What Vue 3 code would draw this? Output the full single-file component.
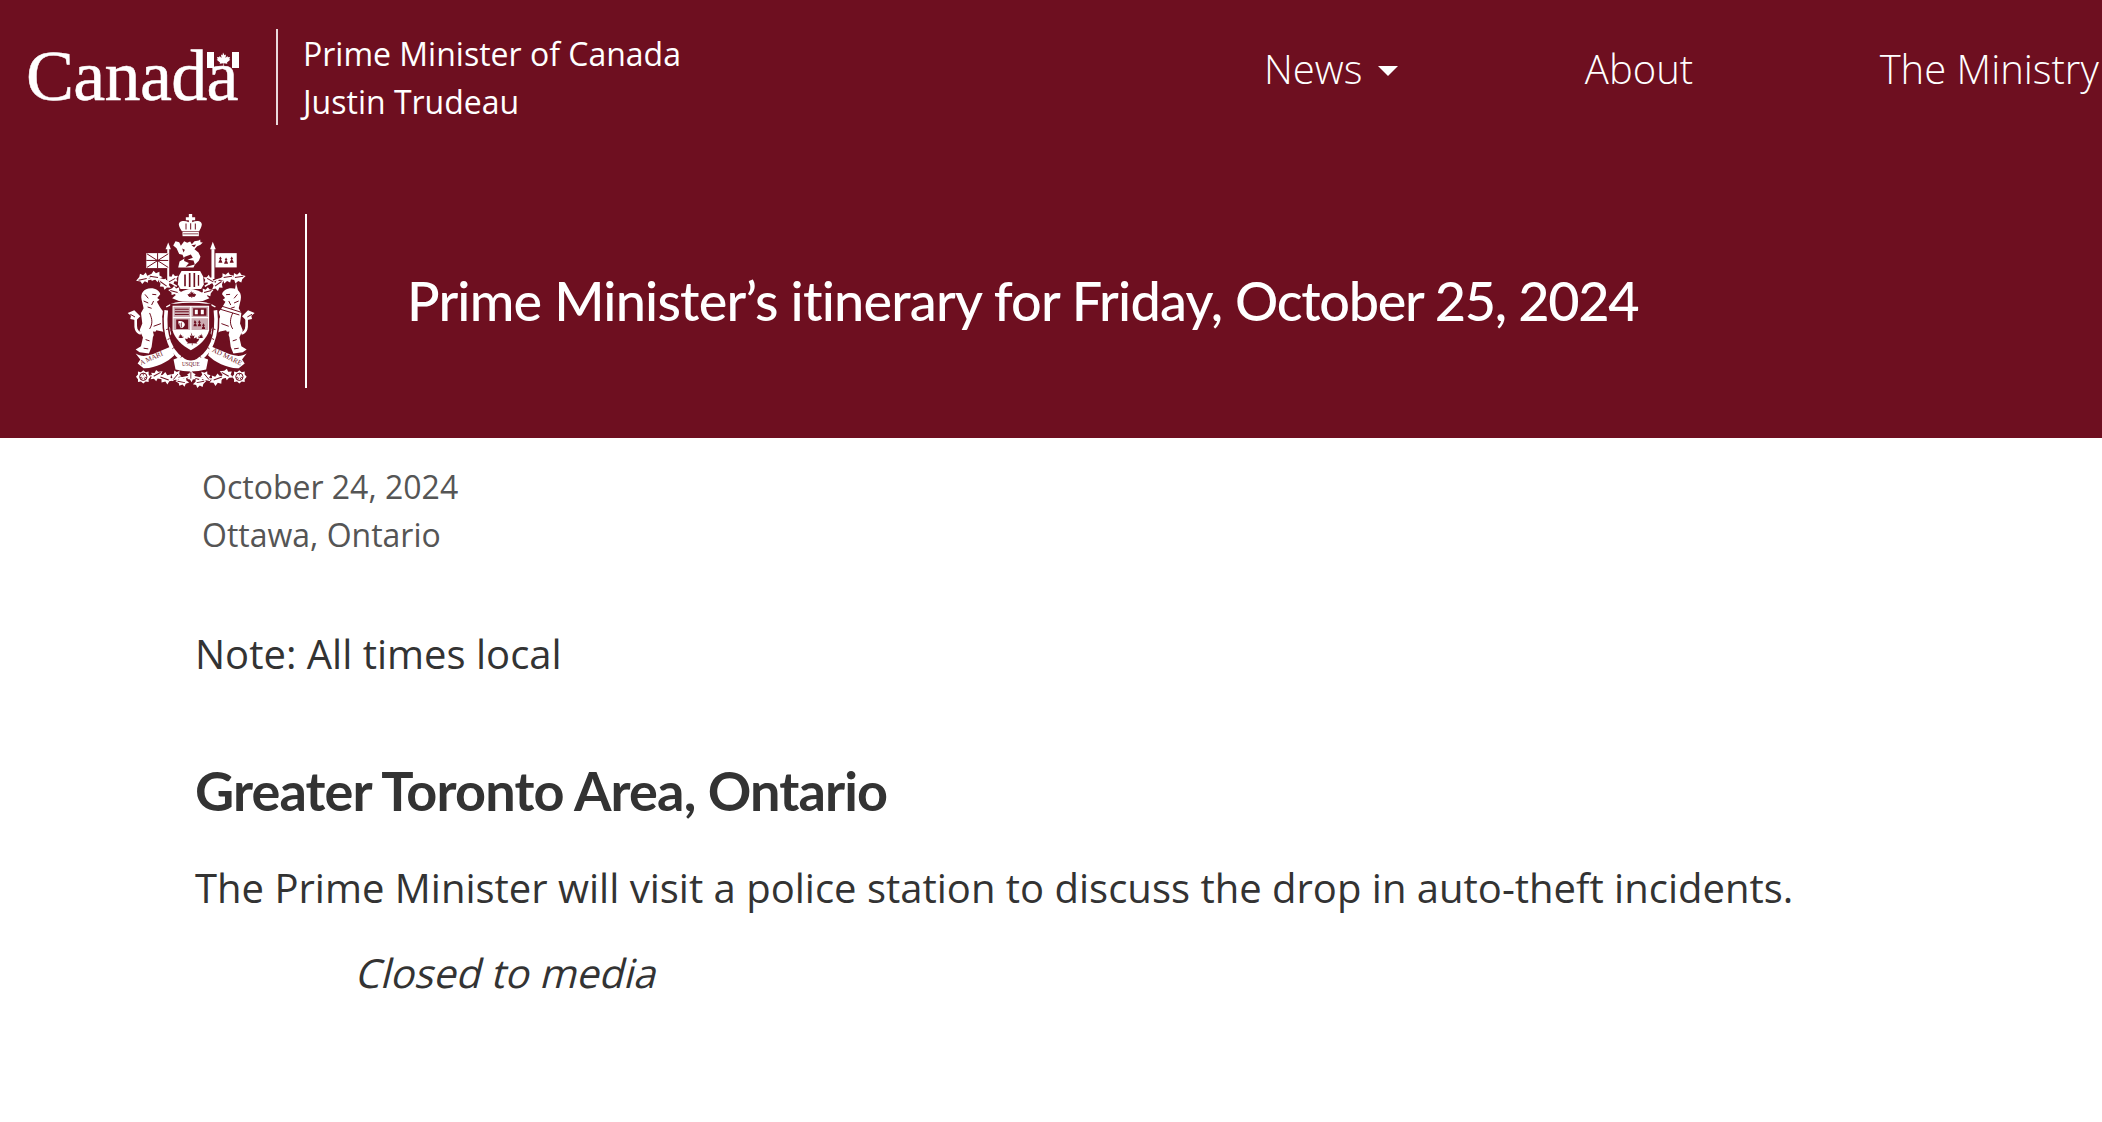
<script setup>
const navItems = [
  { label: 'News', caret: true },
  { label: 'About', caret: false },
  { label: 'The Ministry', caret: false },
]
const leaves = [
  [100, 238, 1.05, -12], [134, 232, 1.05, 10], [162, 254, 1, 35], [188, 240, 0.9, -30], [194, 276, 0.95, 15],
  [384, 232, 1.05, 172], [350, 232, 1.05, 170], [322, 254, 1, 145], [298, 240, 0.9, 210], [290, 276, 0.95, 165],
  [138, 526, 1, 150], [166, 538, 1.1, 20], [198, 530, 0.9, -50], [216, 548, 0.95, 10], [268, 548, 0.95, 170],
  [288, 530, 0.9, 230], [320, 538, 1.1, 160], [348, 526, 1, 30], [242, 530, 0.85, 90],
]
const crestLeaf = (l) => `translate(${l[0]} ${l[1]}) rotate(${l[3]}) scale(${l[2]})`
</script>

<template>
  <div class="page">
    <header class="masthead">
      <div class="topbar">
        <div class="brand">
          <div class="wordmark">
            <span class="wordmark-text">Canada</span>
            <svg class="wordmark-flag" viewBox="0 0 32 16" aria-hidden="true">
              <rect x="0" y="0" width="7" height="16" fill="#fff" />
              <rect x="25" y="0" width="7" height="16" fill="#fff" />
              <path fill="#fff" d="M16 .5l1.500 2.800 1.500-.7-.5 3.300 1.900-1.900.4 1.300 2.200-.3-.7 2.200 1 .5-3.300 2.700.3 1.300-3.600-.4.100 2.700h-.6l.1-2.700-3.600.4.300-1.300-3.300-2.700 1-.5-.7-2.200 2.200.3.4-1.300 1.900 1.900-.5-3.300 1.500.7z" />
            </svg>
          </div>
          <div class="brand-text">
            <div>Prime Minister of Canada</div>
            <div>Justin Trudeau</div>
          </div>
        </div>
        <nav class="nav">
          <a v-for="item in navItems" :key="item.label" class="nav-link">
            {{ item.label }}<span v-if="item.caret" class="caret"></span>
          </a>
        </nav>
      </div>
      <div class="hero">
        <svg class="crest" viewBox="50 40 385 525" aria-hidden="true">
          <defs>
            <g id="crest-supporter">
              <path fill="#fff" d="M94 300C90 282 100 266 122 266c14 0 27 8 28 18l-9 11 7 5-8 6c6 10 10 20 20 30l-4 16c8 16 20 30 34 44l-10 12-24-12-18-4-10 20-4 30-8 20-28-4-12-8 16-10 6-26-10-22 8-20-4-32 8-14z" />
              <path fill="none" stroke="#fff" stroke-width="8" d="M92 402C64 392 84 362 72 346" />
              <path fill="#fff" d="M52 340l20-8 18 18-12 12-18-4 2-10z" />
              <g fill="none" stroke="#6e0f20" stroke-width="3">
                <path d="M104 284l10 12M100 304l14 6M112 322l12 4M130 304l-6 12M126 284l12 1M118 340c8 18 10 32 0 48M152 372l-22 8M106 420l12 4M100 446l14 2M60 344l14 8" />
              </g>
              <path fill="#6e0f20" d="M128 396l24 2 12 8-20 22-14-2 2-14z" />
            </g>
            <path id="crest-leaf" d="M-22 0l11-8 4-9 8 6 9-6 2 10 10 4-10 6-2 10-8-6-9 6-3-8z" />
            <g id="crest-rose">
              <path fill="#fff" d="M0-20l7 6 9-2 0 9 6 7-6 7 0 9-9-2-7 6-7-6-9 2 0-9-6-7 6-7 0-9 9 2z" />
              <circle r="11" fill="none" stroke="#6e0f20" stroke-width="3" />
              <path d="M0-11V-4M10 3l-6-2M6 9l-4-6M-6 9l4-6M-10 3l6-2" stroke="#6e0f20" stroke-width="2.500" fill="none" />
            </g>
          </defs>

          <!-- crown -->
          <g fill="#fff">
            <path d="M236 42h10v10h9v9h-9v6c14-7 30-4 29 8-1 8-5 14-8 19h-52c-3-5-8-11-9-19-1-12 15-15 30-8v-6h-9v-9h9z" />
            <rect x="217" y="96" width="49" height="13" />
          </g>
          <path fill="#6e0f20" d="M226 71h3v18h-3zM240 70h3v19h-3zM254 71h3v18h-3zM219 101h45v2h-45z" />

          <!-- flags and poles -->
          <g fill="#fff">
            <rect x="108" y="160" width="68" height="45" />
            <rect x="171" y="148" width="6" height="95" />
            <path d="M174 128l8 20h-16z" />
            <rect x="316" y="160" width="64" height="43" />
            <rect x="304" y="148" width="9" height="90" />
            <path d="M308 126l9 22h-17z" />
          </g>
          <path d="M110 162l64 41M174 162l-64 41M142 160v45M108 182h66" stroke="#6e0f20" stroke-width="3" fill="none" />
          <path fill="#6e0f20" d="M331 170l4 7-3 3 3 3 2 6h-12l2-6 3-3-3-3zM348 173l4 7-3 3 3 3 2 6h-12l2-6 3-3-3-3zM365 170l4 7-3 3 3 3 2 6h-12l2-6 3-3-3-3z" />

          <!-- crest lion -->
          <path fill="#fff" d="M196 124l11 3 5 11 10-14 9 5 9-4 5 8 8-9 13-2 4-3 1 8 7 1-7 7-10 4-8 9 12 10 6 13-5 12-12 12-4 8h-46l4-18 14-8-5-12-10-2-8-18-10-8z" />
          <path fill="#6e0f20" d="M222 172l20-8 6 10-16 6 18 2 4 12-28 8 10-12-14-6zM244 136l14-2-6 8zM216 146l8 4-4 8z" />

          <!-- mantling and floral leaves -->
          <path d="M110 240c30-8 60 0 90 20M374 236c-30-6-60 2-90 24M120 528c40 14 80 14 122 2 42 12 82 12 122-2" stroke="#fff" stroke-width="5" fill="none" />
          <g v-for="(l, i) in leaves" :key="i" :transform="crestLeaf(l)">
            <use href="#crest-leaf" fill="#fff" />
            <path d="M-15 0h24" stroke="#6e0f20" stroke-width="3" fill="none" />
          </g>

          <!-- helm -->
          <path fill="#fff" d="M214 214h56l9 16 2 24-8 14h-62l-8-14 2-24z" />
          <path fill="#6e0f20" d="M222 224h5v36h-5zM236 220h5v42h-5zM250 220h5v42h-5zM263 226h4v32h-4z" />

          <!-- supporters -->
          <use href="#crest-supporter" />
          <use href="#crest-supporter" transform="translate(486 0) scale(-1 1)" />
          <path fill="#fff" d="M378 250l-6 34 14-4z" />
          <path fill="none" stroke="#6e0f20" stroke-width="3" d="M330 318l64 20M328 328l60 18" />

          <!-- chief of leaves above the shield -->
          <path fill="#fff" d="M186 296c14-16 36-26 56-28 20 2 42 12 56 28l-20 8h-72z" />
          <path fill="#6e0f20" d="M242 272l4 7 4-2-1 6 4-2 1 3 4-1-2 5-3 2 2 2-9-1v4h-2v-4l-9 1 2-2-3-2-2-5 4 1 1-3 4 2-1-6 4 2z" />

          <!-- motto ring -->
          <path d="M168 332C160 400 176 470 242 492c66-22 82-92 74-160" stroke="#6e0f20" stroke-width="20" fill="none" />
          <path d="M168 332C160 400 176 470 242 492c66-22 82-92 74-160" stroke="#fff" stroke-width="11" fill="none" />
          <path d="M168 322c26-20 122-20 148 0" stroke="#fff" stroke-width="4" fill="none" />
          <path d="M168 390l6-2M172 420l6-3M186 448l5-4M212 474l4-5M242 485v-6M272 474l-4-5M298 448l-5-4M312 420l-6-3M316 390l-6-2" stroke="#6e0f20" stroke-width="3" fill="none" />

          <!-- shield -->
          <path fill="#6e0f20" d="M180 312h124v80c-6 30-32 56-62 72-30-16-56-42-62-72z" />
          <path fill="#fff" d="M187 318h110v74c-6 24-28 46-55 60-27-14-49-36-55-60z" />
          <path fill="#6e0f20" d="M190 321h50v31h-50zM244 321h50v31h-50zM190 356h50v35h-50zM244 356h50v35h-50z" opacity=".35" />
          <path fill="#6e0f20" d="M194 327h42v3h-42zM194 335h42v3h-42zM194 343h42v3h-42zM249 326h40v22h-40zM198 360h36v28h-36z" />
          <path fill="#6e0f20" d="M254 361l5 8-3 3 3 3 1 5h-10l1-5 3-3-3-3zM267 361l5 8-3 3 3 3 1 5h-10l1-5 3-3-3-3zM280 371l4 7-3 2 3 3 1 5h-10l1-5 3-3-3-2z" />
          <path fill="#6e0f20" d="M242 398l6 12 5-3-2 10 8-4 1 5 8-1-4 8-5 3 3 4-15-1v6h-2v-6l-15 1 3-4-5-3-4-8 8 1 1-5 8 4-2-10 5 3z" />
          <path fill="#6e0f20" d="M210 402l3 6 3-1-1 5 4-2 1 4-5 1h-7l-4-3 4-1-1-4 3 1zM274 402l-3 6-3-1 1 5-4-2-1 4 5 1h7l4-3-4-1 1-4-3 1z" />
          <path fill="#fff" d="M254 330h9v14h-9zM272 330h9v14h-9zM204 365c9-3 20 2 20 10 0 6-6 9-8 10h-4c-4-5-8-12-8-20z" />
          <path fill="#6e0f20" d="M208 370h2v13h-2zM213 369h2v15h-2z" />

          <!-- ribbons -->
          <path fill="#fff" d="M76 462c24 16 52 2 76-8l32-14 8 28c-20 20-60 40-92 38l-18-14 8-12z" />
          <path fill="#fff" d="M410 462c-24 16-52 2-76-8l-32-14-8 28c20 20 60 40 92 38l18-14-8-12z" />
          <path fill="#fff" d="M190 480l16-6c24 12 48 12 72 0l16 6-6 30c-30 8-62 8-92 0z" />
          <text class="motto" transform="translate(92 497) rotate(-24)">A MARI</text>
          <text class="motto" transform="translate(305 456) rotate(26)">AD MARE</text>
          <text class="motto motto-small" x="242" y="499" text-anchor="middle">USQUE</text>

          <!-- roses -->
          <use href="#crest-rose" transform="translate(99 532)" />
          <use href="#crest-rose" transform="translate(388 532)" />
        </svg>
        <h1 class="title">Prime Minister’s itinerary for Friday, <span class="title-end">October 25, 2024</span></h1>
      </div>
    </header>

    <main class="content">
      <div class="meta">
        <div>October 24, 2024</div>
        <div>Ottawa, Ontario</div>
      </div>
      <p class="note">Note: All times local</p>
      <h2 class="region">Greater Toronto Area, Ontario</h2>
      <p class="body">The Prime Minister will visit a police station to discuss the drop in auto-theft incidents.</p>
      <p class="media"><span class="media-text">Closed to media</span></p>
    </main>
  </div>
</template>

<style>
html, body { background: #fff; }
</style>

<style scoped>
.page {
  width: 2102px;
  height: 1122px;
  overflow: hidden;
  background: #fff;
  font-family: "Open Sans", sans-serif;
  color: #333;
}
.masthead {
  height: 438px;
  background: #6e0f20;
  color: #fff;
  display: flex;
  flex-direction: column;
}
.topbar {
  height: 140px;
  display: flex;
  align-items: flex-start;
  padding: 29px 0 0 28px;
  white-space: nowrap;
}
.brand {
  width: 1236px;
  flex-shrink: 0;
  display: flex;
  align-items: flex-start;
}
.wordmark {
  position: relative;
  width: 248px;
  height: 96px;
}
.wordmark-text {
  position: absolute;
  left: -2px;
  top: 7px;
  font-family: "Liberation Serif", serif;
  font-size: 72px;
  line-height: 80px;
  letter-spacing: -0.7px;
  -webkit-text-stroke: 0.5px #fff;
}
.wordmark-flag {
  position: absolute;
  left: 179px;
  top: 23px;
  width: 32px;
  height: 16px;
}
.brand-text {
  box-sizing: border-box;
  border-left: 2px solid #e9d9dc;
  height: 96px;
  padding-left: 25px;
  font-size: 32px;
  line-height: 48px;
}
.brand-text div {
  position: relative;
  top: 1px;
}
.nav {
  display: flex;
  font-size: 40px;
  font-weight: 300;
  padding-top: 16px;
  line-height: 48px;
}
.nav-link {
  display: inline-flex;
  align-items: center;
  margin-right: 186.5px;
}
.caret {
  width: 0;
  height: 0;
  margin: 4px 0 0 16px;
  border-left: 10px solid transparent;
  border-right: 10px solid transparent;
  border-top: 10px solid #fff;
}
.hero {
  display: flex;
  align-items: center;
  padding: 74px 0 0 127px;
  margin-top: -30px;
}
.crest {
  width: 128px;
  height: 175px;
  flex-shrink: 0;
}
.motto {
  font-family: "Liberation Serif", serif;
  font-size: 21px;
  fill: #6e0f20;
}
.motto-small {
  font-size: 16px;
}
.title {
  margin: 0 0 0 50px;
  border-left: 2px solid #fff;
  height: 174px;
  padding-left: 100px;
  font-family: Lato, sans-serif;
  font-size: 54px;
  font-weight: 500;
  letter-spacing: -0.8px;
  line-height: 174px;
  white-space: nowrap;
}
.title-end {
  letter-spacing: -1.3px;
}
.content {
  padding: 25px 0 0 195px;
}
.meta {
  padding-left: 7px;
  font-size: 32px;
  line-height: 48px;
  color: #555;
}
.note {
  margin: 65px 0 0;
  font-size: 40px;
  line-height: 60px;
}
.region {
  margin: 77px 0 0;
  font-family: Lato, sans-serif;
  font-size: 54px;
  font-weight: 700;
  line-height: 60px;
  letter-spacing: -0.86px;
}
.body {
  margin: 37px 0 0;
  font-size: 40px;
  line-height: 60px;
}
.media {
  margin: 25px 0 0;
  padding-left: 163px;
  font-size: 40px;
  line-height: 60px;
}
.media-text {
  display: inline-block;
  transform: skewX(-14deg);
}
</style>
